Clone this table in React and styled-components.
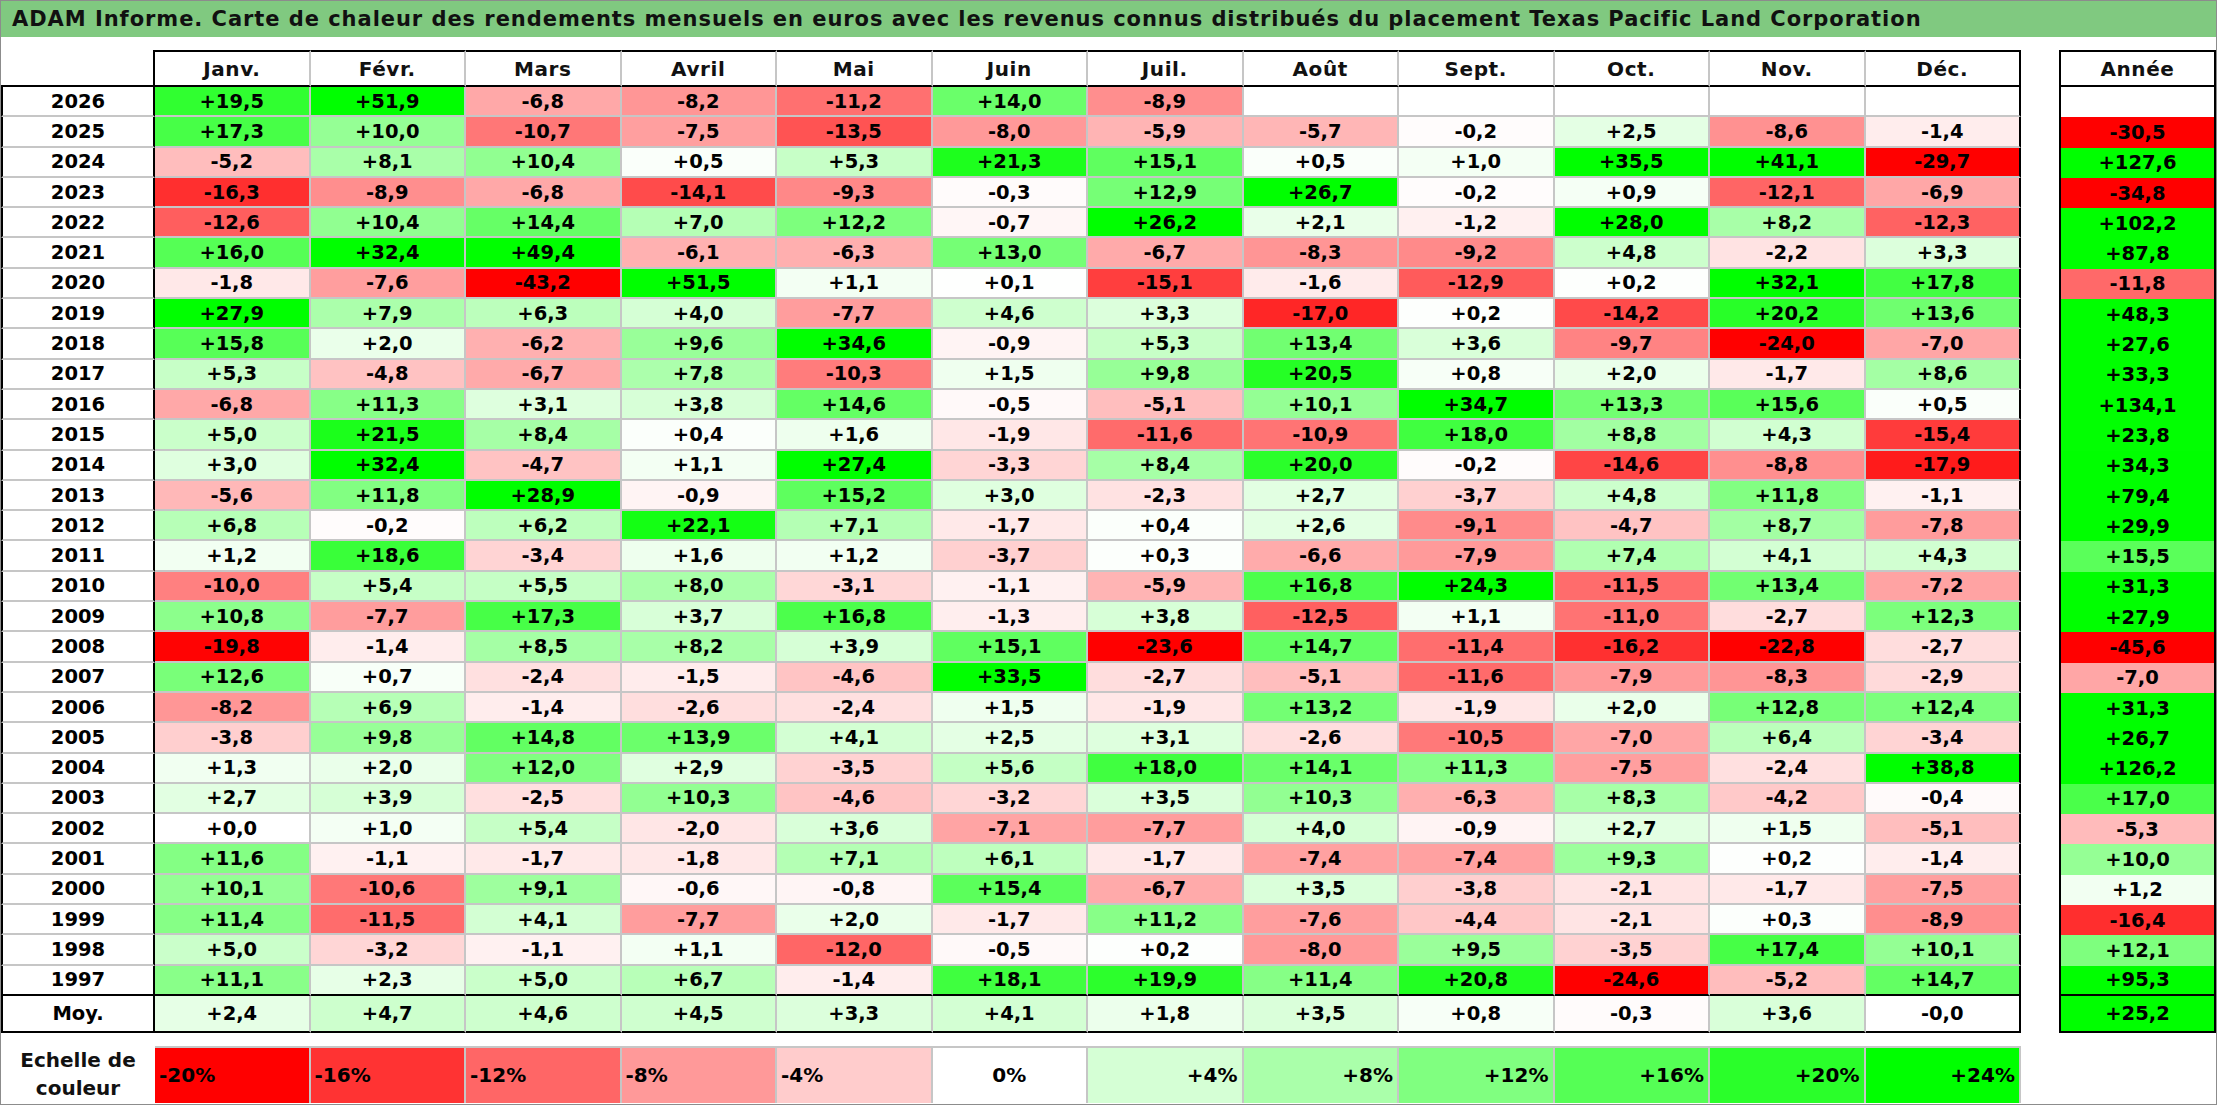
import React from 'react';
import styled, { createGlobalStyle, css } from 'styled-components';

const MONTHS = ['Janv.', 'Févr.', 'Mars', 'Avril', 'Mai', 'Juin', 'Juil.', 'Août', 'Sept.', 'Oct.', 'Nov.', 'Déc.'];

// year, 12 months, year total ('' = no data yet)
const ROWS = [
  ['2026', '+19,5 +51,9 -6,8 -8,2 -11,2 +14,0 -8,9 _ _ _ _ _', ''],
  ['2025', '+17,3 +10,0 -10,7 -7,5 -13,5 -8,0 -5,9 -5,7 -0,2 +2,5 -8,6 -1,4', '-30,5'],
  ['2024', '-5,2 +8,1 +10,4 +0,5 +5,3 +21,3 +15,1 +0,5 +1,0 +35,5 +41,1 -29,7', '+127,6'],
  ['2023', '-16,3 -8,9 -6,8 -14,1 -9,3 -0,3 +12,9 +26,7 -0,2 +0,9 -12,1 -6,9', '-34,8'],
  ['2022', '-12,6 +10,4 +14,4 +7,0 +12,2 -0,7 +26,2 +2,1 -1,2 +28,0 +8,2 -12,3', '+102,2'],
  ['2021', '+16,0 +32,4 +49,4 -6,1 -6,3 +13,0 -6,7 -8,3 -9,2 +4,8 -2,2 +3,3', '+87,8'],
  ['2020', '-1,8 -7,6 -43,2 +51,5 +1,1 +0,1 -15,1 -1,6 -12,9 +0,2 +32,1 +17,8', '-11,8'],
  ['2019', '+27,9 +7,9 +6,3 +4,0 -7,7 +4,6 +3,3 -17,0 +0,2 -14,2 +20,2 +13,6', '+48,3'],
  ['2018', '+15,8 +2,0 -6,2 +9,6 +34,6 -0,9 +5,3 +13,4 +3,6 -9,7 -24,0 -7,0', '+27,6'],
  ['2017', '+5,3 -4,8 -6,7 +7,8 -10,3 +1,5 +9,8 +20,5 +0,8 +2,0 -1,7 +8,6', '+33,3'],
  ['2016', '-6,8 +11,3 +3,1 +3,8 +14,6 -0,5 -5,1 +10,1 +34,7 +13,3 +15,6 +0,5', '+134,1'],
  ['2015', '+5,0 +21,5 +8,4 +0,4 +1,6 -1,9 -11,6 -10,9 +18,0 +8,8 +4,3 -15,4', '+23,8'],
  ['2014', '+3,0 +32,4 -4,7 +1,1 +27,4 -3,3 +8,4 +20,0 -0,2 -14,6 -8,8 -17,9', '+34,3'],
  ['2013', '-5,6 +11,8 +28,9 -0,9 +15,2 +3,0 -2,3 +2,7 -3,7 +4,8 +11,8 -1,1', '+79,4'],
  ['2012', '+6,8 -0,2 +6,2 +22,1 +7,1 -1,7 +0,4 +2,6 -9,1 -4,7 +8,7 -7,8', '+29,9'],
  ['2011', '+1,2 +18,6 -3,4 +1,6 +1,2 -3,7 +0,3 -6,6 -7,9 +7,4 +4,1 +4,3', '+15,5'],
  ['2010', '-10,0 +5,4 +5,5 +8,0 -3,1 -1,1 -5,9 +16,8 +24,3 -11,5 +13,4 -7,2', '+31,3'],
  ['2009', '+10,8 -7,7 +17,3 +3,7 +16,8 -1,3 +3,8 -12,5 +1,1 -11,0 -2,7 +12,3', '+27,9'],
  ['2008', '-19,8 -1,4 +8,5 +8,2 +3,9 +15,1 -23,6 +14,7 -11,4 -16,2 -22,8 -2,7', '-45,6'],
  ['2007', '+12,6 +0,7 -2,4 -1,5 -4,6 +33,5 -2,7 -5,1 -11,6 -7,9 -8,3 -2,9', '-7,0'],
  ['2006', '-8,2 +6,9 -1,4 -2,6 -2,4 +1,5 -1,9 +13,2 -1,9 +2,0 +12,8 +12,4', '+31,3'],
  ['2005', '-3,8 +9,8 +14,8 +13,9 +4,1 +2,5 +3,1 -2,6 -10,5 -7,0 +6,4 -3,4', '+26,7'],
  ['2004', '+1,3 +2,0 +12,0 +2,9 -3,5 +5,6 +18,0 +14,1 +11,3 -7,5 -2,4 +38,8', '+126,2'],
  ['2003', '+2,7 +3,9 -2,5 +10,3 -4,6 -3,2 +3,5 +10,3 -6,3 +8,3 -4,2 -0,4', '+17,0'],
  ['2002', '+0,0 +1,0 +5,4 -2,0 +3,6 -7,1 -7,7 +4,0 -0,9 +2,7 +1,5 -5,1', '-5,3'],
  ['2001', '+11,6 -1,1 -1,7 -1,8 +7,1 +6,1 -1,7 -7,4 -7,4 +9,3 +0,2 -1,4', '+10,0'],
  ['2000', '+10,1 -10,6 +9,1 -0,6 -0,8 +15,4 -6,7 +3,5 -3,8 -2,1 -1,7 -7,5', '+1,2'],
  ['1999', '+11,4 -11,5 +4,1 -7,7 +2,0 -1,7 +11,2 -7,6 -4,4 -2,1 +0,3 -8,9', '-16,4'],
  ['1998', '+5,0 -3,2 -1,1 +1,1 -12,0 -0,5 +0,2 -8,0 +9,5 -3,5 +17,4 +10,1', '+12,1'],
  ['1997', '+11,1 +2,3 +5,0 +6,7 -1,4 +18,1 +19,9 +11,4 +20,8 -24,6 -5,2 +14,7', '+95,3'],
  ['Moy.', '+2,4 +4,7 +4,6 +4,5 +3,3 +4,1 +1,8 +3,5 +0,8 -0,3 +3,6 -0,0', '+25,2'],
].map(([label, months, year]) => ({
  label,
  months: months.split(' ').map((m) => (m === '_' ? '' : m)),
  year,
}));

const SCALE = [-20, -16, -12, -8, -4, 0, 4, 8, 12, 16, 20, 24];

const BLACK = '#000';
const GRID = '#c6c6c6';

// red below zero (full at -20), green above (full at +24)
const heat = (text) => {
  if (text === '' || text == null) return '#ffffff';
  const v = typeof text === 'number' ? text : parseFloat(text.replace(',', '.'));
  if (v < 0) {
    const c = Math.round(255 * (1 - Math.min(-v / 20, 1)));
    return `rgb(255, ${c}, ${c})`;
  }
  const c = Math.round(255 * (1 - Math.min(v / 24, 1)));
  return `rgb(${c}, 255, ${c})`;
};

const GlobalStyle = createGlobalStyle`
  html, body {
    margin: 0;
    padding: 0;
    background: #fff;
  }
  body {
    font-family: "DejaVu Sans", "Liberation Sans", sans-serif;
    color: #000;
  }
`;

const Frame = styled.div`
  width: 2217px;
  height: 1105px;
  box-sizing: border-box;
  border: 1px solid #8c8c8c;
  overflow: hidden;
  display: flex;
  flex-direction: column;
`;

const TitleBar = styled.div`
  height: 36px;
  flex: none;
  background: #80c980;
  display: flex;
  align-items: center;
  padding-left: 11px;
  font-size: 21px;
  letter-spacing: 0.95px;
  font-weight: bold;
  color: #111;
  white-space: nowrap;
`;

const Content = styled.div`
  padding-top: 13px;
  display: flex;
  flex-direction: column;
  gap: 13px;
`;

const TopRow = styled.div`
  display: flex;
  gap: 38px;
  align-items: flex-start;
`;

const rowTemplate = css`
  grid-template-rows: 37px repeat(30, 30.3px) 37px;
`;

const MainGrid = styled.div`
  width: 2020px;
  display: grid;
  grid-template-columns: 154px repeat(12, 1fr);
  ${rowTemplate}
`;

const YearGrid = styled.div`
  width: 157px;
  display: grid;
  grid-template-columns: 1fr;
  ${rowTemplate}
`;

const cellBase = css`
  box-sizing: border-box;
  display: flex;
  align-items: center;
  justify-content: center;
  font-size: 19.5px;
  font-weight: bold;
  white-space: nowrap;
  min-width: 0;
`;

const headText = css`
  font-size: 20px;
  letter-spacing: 0.6px;
`;

const Corner = styled.div`
  ${cellBase}
  border-right: 2px solid ${BLACK};
  border-bottom: 2px solid ${BLACK};
`;

const MonthHead = styled.div`
  ${cellBase}
  ${headText}
  color: #111;
  border-top: 2px solid ${BLACK};
  border-bottom: 2px solid ${BLACK};
  border-right: 2px solid ${(p) => (p.$last ? BLACK : GRID)};
  padding-top: 1px;
`;

const RowLabel = styled.div`
  ${cellBase}
  border-left: 2px solid ${BLACK};
  border-right: 2px solid ${BLACK};
  border-bottom: 2px solid ${(p) => (p.$edge ? BLACK : GRID)};
`;

const Value = styled.div`
  ${cellBase}
  background: ${(p) => heat(p.$value)};
  border-right: 2px solid ${(p) => (p.$last ? BLACK : GRID)};
  border-bottom: 2px solid ${(p) => (p.$edge ? BLACK : GRID)};
`;

const YearHead = styled.div`
  ${cellBase}
  ${headText}
  color: #111;
  border: 2px solid ${BLACK};
  padding-top: 1px;
`;

const YearValue = styled.div`
  ${cellBase}
  background: ${(p) => heat(p.$value)};
  border-left: 2px solid ${BLACK};
  border-right: 2px solid ${BLACK};
  border-bottom: ${(p) => (p.$edge ? `2px solid ${BLACK}` : '0')};
`;

const ScaleRow = styled.div`
  width: 2020px;
  height: 57px;
  display: grid;
  grid-template-columns: 154px repeat(12, 1fr);
`;

const ScaleLabel = styled.div`
  display: flex;
  align-items: center;
  justify-content: center;
  text-align: center;
  font-size: 20px;
  font-weight: bold;
  line-height: 28px;
  color: #111;
`;

const alignFor = { left: 'flex-start', center: 'center', right: 'flex-end' };

const ScaleCell = styled.div`
  ${cellBase}
  font-size: 20px;
  justify-content: ${(p) => alignFor[p.$align]};
  padding: 0 4px;
  background: ${(p) => heat(p.$value)};
  border-top: 2px solid ${GRID};
  border-right: 2px solid ${GRID};
`;

const fmtScale = (v) => {
  if (v === 0) return '0%';
  return v > 0 ? `+${v}%` : `${v}%`;
};

const App = () => {
  const lastData = ROWS.length - 2;
  return (
    <>
      <GlobalStyle />
      <Frame>
        <TitleBar>
          ADAM Informe. Carte de chaleur des rendements mensuels en euros avec les revenus connus distribués du placement Texas Pacific Land Corporation
        </TitleBar>
        <Content>
          <TopRow>
            <MainGrid>
              <Corner />
              {MONTHS.map((m, i) => (
                <MonthHead key={m} $last={i === 11}>{m}</MonthHead>
              ))}
              {ROWS.map((row, r) => {
                const edge = r >= lastData;
                return (
                  <React.Fragment key={row.label}>
                    <RowLabel $edge={edge}>{row.label}</RowLabel>
                    {row.months.map((v, c) => (
                      // eslint-disable-next-line react/no-array-index-key
                      <Value key={c} $value={v} $last={c === 11} $edge={edge}>{v}</Value>
                    ))}
                  </React.Fragment>
                );
              })}
            </MainGrid>
            <YearGrid>
              <YearHead>Année</YearHead>
              {ROWS.map((row, r) => (
                <YearValue key={row.label} $value={row.year} $edge={r >= lastData}>
                  {row.year}
                </YearValue>
              ))}
            </YearGrid>
          </TopRow>
          <ScaleRow>
            <ScaleLabel>
              Echelle de
              <br />
              couleur
            </ScaleLabel>
            {SCALE.map((v) => {
              let align = 'center';
              if (v < 0) align = 'left';
              if (v > 0) align = 'right';
              return (
                <ScaleCell key={v} $value={v} $align={align}>{fmtScale(v)}</ScaleCell>
              );
            })}
          </ScaleRow>
        </Content>
      </Frame>
    </>
  );
};

export default App;
